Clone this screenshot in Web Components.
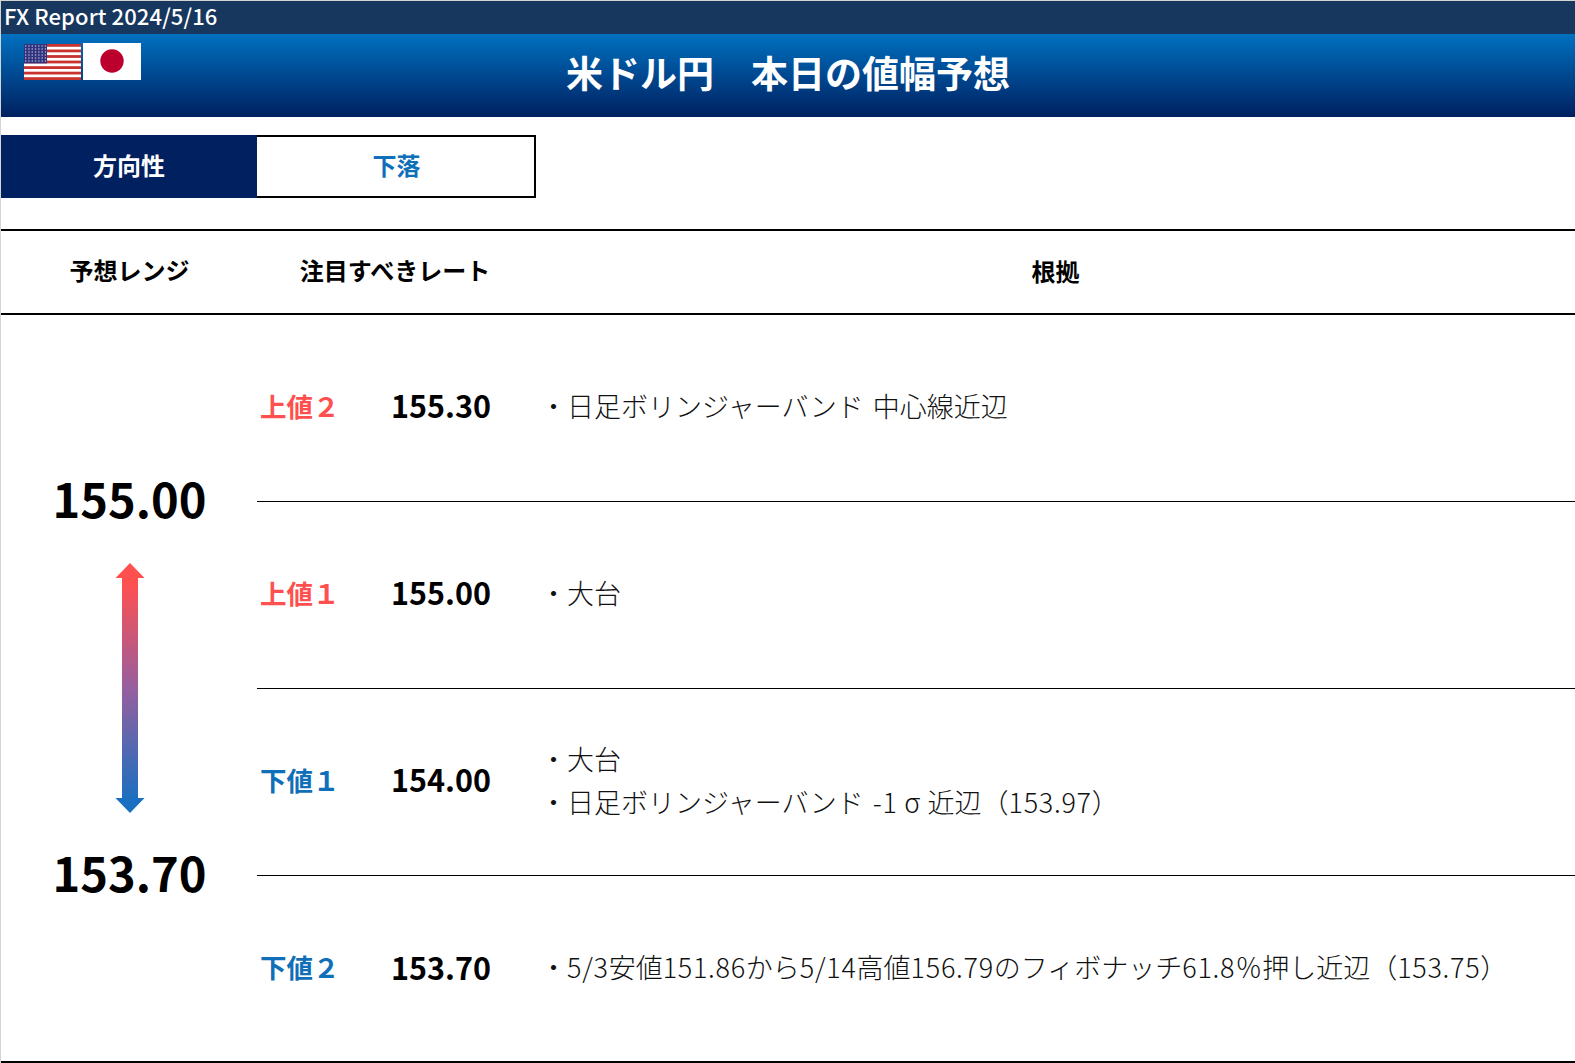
<!DOCTYPE html>
<html lang="ja">
<head>
<meta charset="utf-8">
<title>FX Report</title>
<style>
  html, body { margin: 0; padding: 0; background: #fff; }
  body { font-family: "Noto Sans CJK JP", "Liberation Sans", sans-serif; color: #000; }
  .n { letter-spacing: .7px; }
  .s { letter-spacing: 3px; }
</style>
</head>
<body>
<fx-report>
  <fx-titlebar slot="top">FX Report 2024/5/16</fx-titlebar>
  <fx-banner slot="top">米ドル円　本日の値幅予想</fx-banner>
  <fx-direction slot="top" value="下落"></fx-direction>
  <fx-range slot="range" high="155.00" low="153.70"></fx-range>
  <fx-level slot="levels" label="上値２" tone="up" rate="155.30">
    <div>・日足ボリンジャーバンド<span class="s"> </span>中心線近辺</div>
  </fx-level>
  <fx-level slot="levels" label="上値１" tone="up" rate="155.00">
    <div>・大台</div>
  </fx-level>
  <fx-level slot="levels" label="下値１" tone="down" rate="154.00" tall>
    <div>・大台</div>
    <div>・日足ボリンジャーバンド<span class="s"> </span><span class="n">-1 σ </span>近辺（<span class="n">153.97</span>）</div>
  </fx-level>
  <fx-level slot="levels" label="下値２" tone="down" rate="153.70" last>
    <div>・<span class="n">5/3</span>安値<span class="n">151.86</span>から<span class="n">5/14</span>高値<span class="n">156.79</span>のフィボナッチ<span class="n">61.8</span>％押し近辺（<span class="n">153.75</span>）</div>
  </fx-level>
</fx-report>

<script>
class FxReport extends HTMLElement {
  constructor() {
    super()
    this.shadow = this.attachShadow({ mode: 'open' })
  }
  connectedCallback() {
    this.shadow.innerHTML = /*html*/`
    <style>
      :host { display: block; height: 1063px; box-sizing: border-box; border-left: 1px solid #d4d4d4; border-top: 1px solid #d4d4d4; overflow: hidden; }
      .heads {
        display: grid; grid-template-columns: 257px 274px 1fr;
        height: 86px; margin-top: 31px; box-sizing: border-box;
        border-top: 2px solid #000; border-bottom: 2px solid #000;
        font-size: 24px; font-weight: 700; text-align: center; line-height: 80px;
      }
      .heads div:nth-child(-n+2) { line-height: 78px; }
      .heads div:last-child { padding-left: 4px; }
      .body { display: grid; grid-template-columns: 256px 1fr; height: 746px; border-bottom: 2px solid #000; }
    </style>
    <slot name="top"></slot>
    <div class="heads"><div>予想レンジ</div><div>注目すべきレート</div><div>根拠</div></div>
    <div class="body">
      <slot name="range"></slot>
      <div><slot name="levels"></slot></div>
    </div>`
  }
}

class FxTitlebar extends HTMLElement {
  constructor() {
    super()
    this.shadow = this.attachShadow({ mode: 'open' })
  }
  connectedCallback() {
    this.shadow.innerHTML = /*html*/`
    <style>
      :host { display: block; height: 33px; background: #17375e; color: #fff; font-size: 22px; line-height: 28px; padding-left: 3px; font-weight: 500; letter-spacing: .1px; }
    </style>
    <slot></slot>`
  }
}

class FxBanner extends HTMLElement {
  constructor() {
    super()
    this.shadow = this.attachShadow({ mode: 'open' })
  }
  connectedCallback() {
    this.shadow.innerHTML = /*html*/`
    <style>
      :host {
        display: flex; justify-content: center; align-items: center; position: relative;
        height: 83px; box-sizing: border-box; padding-bottom: 8px;
        background: linear-gradient(#0070c0, #002060); color: #fff;
        font-size: 37px; font-weight: 700;
      }
      .flags { position: absolute; left: 23px; top: 9px; display: flex; gap: 2px; align-items: flex-end; }
      svg { display: block; }
    </style>
    <div class="flags">
      <svg width="57" height="36" viewBox="0 0 57 36">
        <rect width="57" height="36" fill="#fff"/>
        <g fill="#c8332e">
          <rect y="0" width="57" height="2.8"/><rect y="5.5" width="57" height="2.8"/>
          <rect y="11.1" width="57" height="2.8"/><rect y="16.6" width="57" height="2.8"/>
          <rect y="22.2" width="57" height="2.8"/><rect y="27.7" width="57" height="2.8"/>
          <rect y="33.2" width="57" height="2.8"/>
        </g>
        <rect width="23" height="19.4" fill="#32337e"/>
        <path d="M1 2h21M1 5h21M1 8h21M1 11h21M1 14h21M1 17h21" stroke="#dfe0f0" stroke-width="1.2" stroke-dasharray="1.3 2"/>
      </svg>
      <svg width="58" height="37" viewBox="0 0 58 37">
        <rect width="58" height="37" fill="#fff"/>
        <circle cx="29" cy="18" r="11.7" fill="#bc002d"/>
      </svg>
    </div>
    <slot></slot>`
  }
}

class FxDirection extends HTMLElement {
  constructor() {
    super()
    this.shadow = this.attachShadow({ mode: 'open' })
  }
  connectedCallback() {
    this.shadow.innerHTML = /*html*/`
    <style>
      :host { display: flex; width: 535px; height: 63px; margin-top: 18px; font-size: 24px; font-weight: 700; }
      .k { width: 256px; background: #002060; color: #fff; display: flex; align-items: center; justify-content: center; padding-bottom: 4px; box-sizing: border-box; }
      .v { flex: 1; box-sizing: border-box; border: 2px solid #000; border-left: 0; color: #0f6fb8; display: flex; align-items: center; justify-content: center; padding: 0 0 4px 2px; }
    </style>
    <div class="k">方向性</div>
    <div class="v">${this.getAttribute('value')}</div>`
  }
}

class FxRange extends HTMLElement {
  constructor() {
    super()
    this.shadow = this.attachShadow({ mode: 'open' })
  }
  connectedCallback() {
    this.shadow.innerHTML = /*html*/`
    <style>
      :host { display: flex; flex-direction: column; align-items: center; justify-content: center; font-size: 47px; font-weight: 700; height: 745px; box-sizing: border-box; padding: 0 0 1px 1px; }
      .hi { height: 70px; line-height: 66px; }
      .lo { height: 70px; line-height: 64px; }
      svg { display: block; margin: 28px 0 27px; }
    </style>
    <div class="hi">${this.getAttribute('high')}</div>
    <svg width="30" height="250" viewBox="0 0 30 250">
      <defs>
        <linearGradient id="g" x1="0" y1="0" x2="0" y2="1">
          <stop offset="0.08" stop-color="#ff5050"/>
          <stop offset="0.5" stop-color="#975f9e"/>
          <stop offset="0.95" stop-color="#1a6fc0"/>
        </linearGradient>
      </defs>
      <path d="M15 0L29.5 15H23V235H29.5L15 250L.5 235H7V15H.5Z" fill="url(#g)"/>
    </svg>
    <div class="lo">${this.getAttribute('low')}</div>`
  }
}

class FxLevel extends HTMLElement {
  constructor() {
    super()
    this.shadow = this.attachShadow({ mode: 'open' })
  }
  connectedCallback() {
    let tone = this.getAttribute('tone') == 'up' ? '#ff5050' : '#0f6fb8'
    let border = this.hasAttribute('last') ? '0' : '1px solid #000'
    this.shadow.innerHTML = /*html*/`
    <style>
      :host { display: grid; grid-template-columns: 134px 149px 1fr; align-items: center; height: 187px; box-sizing: border-box; border-bottom: ${border}; }
      .label { padding: 0 0 6px 3px; color: ${tone}; font-size: 26.5px; font-weight: 700; }
      .rate { padding-bottom: 6px; font-size: 30.5px; font-weight: 700; }
      .why { padding-bottom: 6px; font-size: 27px; line-height: 43px; font-weight: 300; color: #111; }
      :host([tall]) .why { padding-bottom: 4px; }
    </style>
    <div class="label">${this.getAttribute('label')}</div>
    <div class="rate">${this.getAttribute('rate')}</div>
    <div class="why"><slot></slot></div>`
  }
}

customElements.define('fx-report', FxReport)
customElements.define('fx-titlebar', FxTitlebar)
customElements.define('fx-banner', FxBanner)
customElements.define('fx-direction', FxDirection)
customElements.define('fx-range', FxRange)
customElements.define('fx-level', FxLevel)
</script>
</body>
</html>
